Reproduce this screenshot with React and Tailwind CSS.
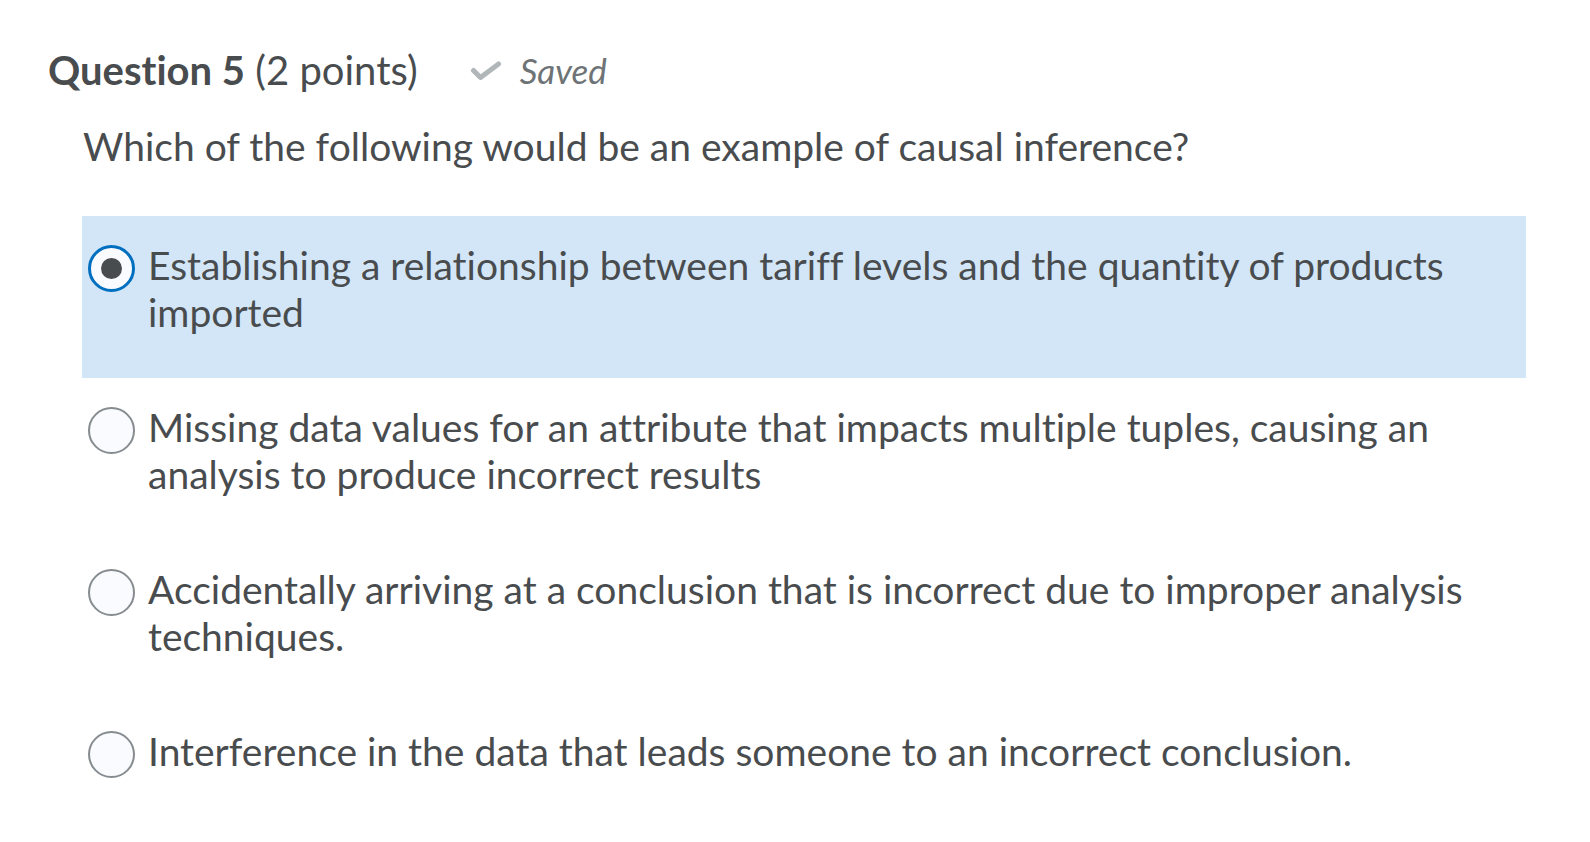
const options = [
  {
    text: "Establishing a relationship between tariff levels and the quantity of products imported",
    selected: true,
  },
  {
    text: "Missing data values for an attribute that impacts multiple tuples, causing an analysis to produce incorrect results",
    selected: false,
  },
  {
    text: "Accidentally arriving at a conclusion that is incorrect due to improper analysis techniques.",
    selected: false,
  },
  {
    text: "Interference in the data that leads someone to an incorrect conclusion.",
    selected: false,
  },
];

function Radio({ checked }) {
  if (checked) {
    return (
      <div className="mt-[3px] flex h-[47px] w-[47px] shrink-0 items-center justify-center rounded-full border-[3px] border-[#006fbf] bg-[#f9fbff]">
        <div className="h-[21px] w-[21px] rounded-full bg-[#494c4e]"></div>
      </div>
    );
  }
  return (
    <div className="mt-[3px] h-[47px] w-[47px] shrink-0 rounded-full border-2 border-[#868c8f] bg-[#f9fbff]"></div>
  );
}

export default function App() {
  return (
    <div
      className="min-h-screen overflow-hidden bg-white pl-[48px] pt-[46px] text-[#494c4e] [font-variant-ligatures:none]"
      style={{ fontFamily: "Lato, 'Open Sans', sans-serif" }}
    >
      {/* header */}
      <div className="flex items-center">
        <h2 className="text-[40px] leading-[48px]">
          <span className="font-bold">Question 5</span> (2 points)
        </h2>
        <svg
          className="ml-[52px] mt-[1px]"
          width="32"
          height="20"
          viewBox="0 0 32 20"
          fill="none"
          stroke="#b1b6b9"
          strokeWidth="5"
          strokeLinecap="round"
          strokeLinejoin="round"
        >
          <polyline points="3.5,9.5 10.5,16.5 28.5,3" />
        </svg>
        <span className="ml-[18px] text-[35px] italic leading-[48px] text-[#6e7376]">Saved</span>
      </div>

      <p className="mt-[29px] pl-[35px] text-[39px] leading-[47px]">
        Which of the following would be an example of causal inference?
      </p>

      {/* answers */}
      <div className="mt-[46px] ml-[34px] w-[1444px]">
        {options.map((opt, i) => (
          <div
            key={i}
            className={
              "flex h-[162px] gap-[13px] pl-[6px] pt-[26px] " +
              (opt.selected ? "bg-[#d3e6f7]" : "")
            }
          >
            <Radio checked={opt.selected} />
            <div className="pr-[60px] text-[39px] leading-[47px]">{opt.text}</div>
          </div>
        ))}
      </div>
    </div>
  );
}
